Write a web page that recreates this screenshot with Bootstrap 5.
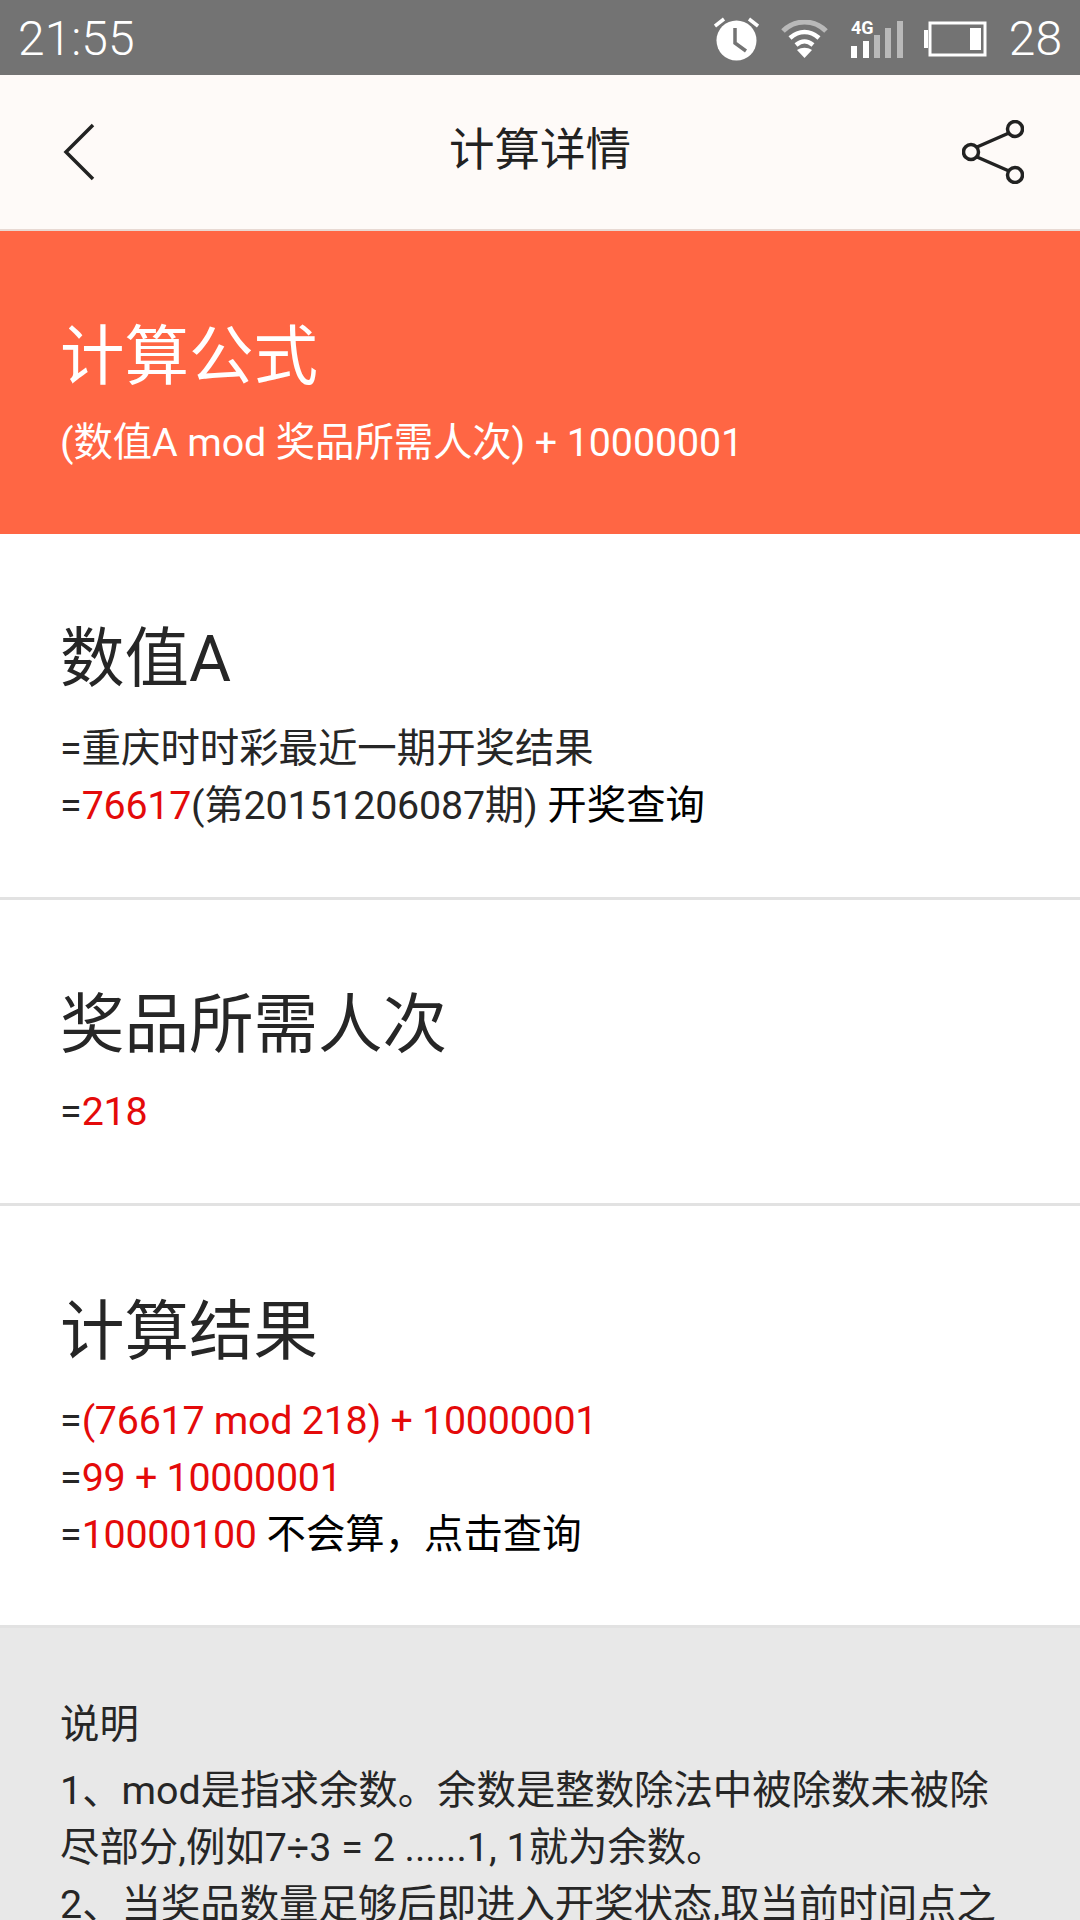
<!DOCTYPE html>
<html lang="zh-CN">
<head>
  <meta charset="UTF-8" />
  <meta name="viewport" content="width=device-width, initial-scale=1" />
  <title>计算详情</title>
  <link href="https://cdn.jsdelivr.net/npm/bootstrap@5.3.2/dist/css/bootstrap.min.css" rel="stylesheet" />
  <style>
    html, body { height: 1920px; overflow: hidden; }
    body {
      font-family: Roboto, "Noto Sans CJK SC", sans-serif;
      font-size: 39.4px;
      line-height: 57px;
      color: #262626;
      background: #fff;
    }
    /* status bar */
    .status-bar { height: 75px; background: #737373; color: #fff; padding: 2px 18px 0 18px; font-weight: 300; font-size: 48px; line-height: 73px; }
    .status-icons { gap: 22px; }
    .signal-icon { margin: 0 -1px 0 1px; }
    /* title bar */
    .title-bar { height: 156px; background: #fefaf8; border-bottom: 2px solid #e8d9d3; padding: 0 56px; }
    .side-icon { width: 64px; }
    .back-icon { padding-left: 7px; }
    .share-icon { padding-left: 2px; }
    .title-text { font-size: 45.5px; color: #222; margin: 0; line-height: 1; padding-bottom: 2px; }
    /* blocks */
    .formula-block { height: 303px; background: #ff6644; color: #fff; padding: 88px 60px 0; }
    .calc-block { padding: 0 60px; border-bottom: 3px solid #e2e2e2; }
    .calc-a { height: 366px; padding-top: 87px; }
    .calc-num { height: 306px; padding-top: 87px; }
    .calc-res { height: 422px; padding-top: 88px; }
    .big-head { font-size: 64.5px; line-height: 76px; font-weight: 400; margin: 0 0 23px; }
    .formula-block .big-head { margin-bottom: 19px; }
    .calc-res .big-head { margin-bottom: 22px; }
    .calc-num .big-head { margin-bottom: 20px; }
    .num-red { color: #e40a0a; letter-spacing: -.25px; }
    .num-plain { letter-spacing: -.2px; }
    .formula-line { letter-spacing: -.1px; }
    .link-text { color: #000; }
    .note-block { background: #e8e8e8; padding: 68px 60px 0; height: 293px; overflow: hidden; }
    .note-block p { margin: 0 0 9px; line-height: 57px; }
  </style>
</head>
<body>
  <div class="status-bar d-flex justify-content-between align-items-center">
    <span>21:55</span>
    <div class="status-icons d-flex align-items-center">
      <svg width="45" height="44" viewBox="0 0 45 44">
        <circle cx="22.5" cy="23.5" r="20" fill="#fff"/>
        <path d="M21 11v15l11 8" fill="none" stroke="#737373" stroke-width="3.5"/>
        <path d="M1 9l9-7M44 9l-9-7" stroke="#fff" stroke-width="3.5" fill="none"/>
      </svg>
      <svg width="47" height="38" viewBox="0 0 47 38">
        <path d="M2 11C14-1 33-1 45 11" fill="none" stroke="#b9b9b9" stroke-width="5"/>
        <path d="M9 18c9-8 20-8 29 0M15 25c6-5 11-5 17 0" fill="none" stroke="#fff" stroke-width="4.5"/>
        <path d="M16 30c5-3 10-3 15 0l-7.5 8z" fill="#fff"/>
      </svg>
      <svg class="signal-icon" width="52" height="46" viewBox="0 -4 52 46">
        <text x="0" y="14" fill="#fff" font-family="Roboto" font-size="18" font-weight="700">4G</text>
        <rect x="0" y="26" width="6" height="12" fill="#fff"/>
        <rect x="12" y="21" width="6" height="17" fill="#fff"/>
        <rect x="23" y="15" width="6" height="23" fill="#b9b9b9"/>
        <rect x="34" y="8" width="6" height="30" fill="#b9b9b9"/>
        <rect x="46" y="1" width="6" height="37" fill="#b9b9b9"/>
      </svg>
      <svg width="63" height="36" viewBox="0 0 63 36">
        <rect x="6" y="2" width="55" height="32" fill="none" stroke="#fff" stroke-width="3"/>
        <rect x="0" y="9" width="4" height="18" fill="#fff"/>
        <rect x="46" y="7" width="11" height="22" fill="#fff"/>
      </svg>
      <span>28</span>
    </div>
  </div>

  <div class="title-bar d-flex align-items-center justify-content-between">
    <div class="side-icon back-icon">
      <svg class="d-block" width="34" height="58" viewBox="0 0 34 58">
        <path d="M30 2L3 29l27 27" fill="none" stroke="#222" stroke-width="3.5"/>
      </svg>
    </div>
    <h1 class="title-text fw-normal">计算详情</h1>
    <div class="side-icon share-icon">
      <svg class="d-block" width="62" height="64" viewBox="0 0 62 64">
        <circle cx="9" cy="32" r="7.5" fill="none" stroke="#222" stroke-width="3.5"/>
        <circle cx="53" cy="9" r="7.5" fill="none" stroke="#222" stroke-width="3.5"/>
        <circle cx="53" cy="55" r="7.5" fill="none" stroke="#222" stroke-width="3.5"/>
        <path d="M15 27L47 13M15 37L47 51" fill="none" stroke="#222" stroke-width="3.5"/>
      </svg>
    </div>
  </div>

  <section class="formula-block">
    <h2 class="big-head">计算公式</h2>
    <div class="formula-line">(数值A mod 奖品所需人次) + 10000001</div>
  </section>

  <section class="calc-block calc-a">
    <h2 class="big-head">数值A</h2>
    <div>=重庆时时彩最近一期开奖结果</div>
    <div>=<span class="num-red">76617</span><span class="num-plain">(第20151206087期)</span> <span class="link-text">开奖查询</span></div>
  </section>

  <section class="calc-block calc-num">
    <h2 class="big-head">奖品所需人次</h2>
    <div>=<span class="num-red">218</span></div>
  </section>

  <section class="calc-block calc-res">
    <h2 class="big-head">计算结果</h2>
    <div>=<span class="num-red">(76617 mod 218) + 10000001</span></div>
    <div>=<span class="num-red">99 + 10000001</span></div>
    <div>=<span class="num-red">10000100</span> <span class="link-text">不会算，点击查询</span></div>
  </section>

  <section class="note-block">
    <p>说明</p>
    <div>
      1、mod是指求余数。余数是整数除法中被除数未被除尽部分,例如7÷3 = 2 ......1, 1就为余数。<br>
      2、当奖品数量足够后即进入开奖状态,取当前时间点之
    </div>
  </section>

  <script src="https://cdn.jsdelivr.net/npm/bootstrap@5.3.2/dist/js/bootstrap.bundle.min.js"></script>
</body>
</html>
